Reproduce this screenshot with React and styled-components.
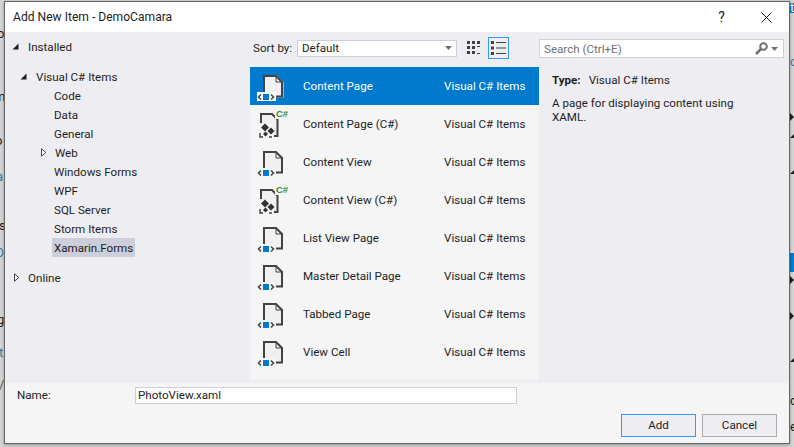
import React from 'react';
import styled, { createGlobalStyle } from 'styled-components';

const Global = createGlobalStyle`
    html, body { margin: 0; padding: 0; height: 100%; overflow: hidden; }
    body { font-family: Roboto, "Noto Sans", sans-serif; font-size: 11.6px; color: #1e1e1e; }
`;

const Desktop = styled.div`
    position: relative;
    width: 794px;
    height: 447px;
    overflow: hidden;
    background: #d4d4d4;
`;

// bits of the IDE behind the dialog
const Peek = styled.span`
    position: absolute;
    top: ${p => p.$y}px;
    left: ${p => p.$x}px;
    font-size: 13px;
    line-height: 14px;
    color: ${p => p.$color || '#1e1e1e'};
`;

const BackBand = styled.div`
    position: absolute;
    right: 0;
    top: ${p => p.$y}px;
    height: ${p => p.$h}px;
    width: 5px;
    background: #007acc;
`;

const BackMark = styled.svg`
    position: absolute;
    left: 790px;
    top: ${p => p.$y}px;
`;

const Window = styled.div`
    position: absolute;
    left: 4px;
    top: 1px;
    width: 786px;
    height: 443px;
    box-sizing: border-box;
    border: 1px solid #666;
    box-shadow: 0 1px 3px rgba(0, 0, 0, 0.3);
    display: flex;
    flex-direction: column;
    background: #eeeef2;
`;

const TitleBar = styled.div`
    height: 30px;
    flex: none;
    background: #fff;
    display: flex;
    align-items: center;
    padding-left: 8px;
    font-size: 12.1px;
`;

const Title = styled.div`
    flex: 1;
`;

const TitleBtn = styled.div`
    width: 45px;
    height: 30px;
    display: flex;
    align-items: center;
    justify-content: center;
    font-size: 14px;
`;

const Body = styled.div`
    flex: 1;
    display: flex;
    min-height: 0;
`;

const TreePane = styled.div`
    width: 245px;
    flex: none;
    padding-top: 5px;
`;

const TreeRow = styled.div`
    height: 19px;
    display: flex;
    align-items: center;
    padding-left: ${p => p.$indent}px;
    margin-top: ${p => p.$gap || 0}px;
`;

const Arrow = styled.span`
    width: 16px;
    margin-left: -16px;
    flex: none;
    display: flex;
    padding-left: 1px;
`;

const TreeLabel = styled.span`
    padding: 0 2px;
    height: 19px;
    line-height: 21px;
    background: ${p => (p.$active ? '#ccceDB' : 'transparent')};
    margin-left: -2px;
`;

const CenterPane = styled.div`
    width: 289px;
    flex: none;
    display: flex;
    flex-direction: column;
`;

const Toolbar = styled.div`
    height: 35px;
    flex: none;
    display: flex;
    align-items: center;
    padding-left: 3px;
    padding-bottom: 3px;
    box-sizing: border-box;
`;

const SortLabel = styled.span`
    width: 44px;
    flex: none;
`;

const Combo = styled.div`
    width: 160px;
    height: 17px;
    box-sizing: border-box;
    border: 1px solid #ccceDB;
    background: #fff;
    display: flex;
    align-items: center;
    justify-content: space-between;
    padding: 0 4px;
`;

const ViewBtn = styled.div`
    width: 21px;
    height: 22px;
    box-sizing: border-box;
    margin-left: ${p => p.$gap}px;
    border: 1px solid ${p => (p.$on ? '#3399ff' : 'transparent')};
    display: flex;
    align-items: center;
    justify-content: center;
`;

const ItemList = styled.div`
    height: 313px;
    background: #f5f5f5;
`;

const Item = styled.div`
    height: 38px;
    display: grid;
    grid-template-columns: 53px 141px 1fr;
    align-items: center;
    background: ${p => (p.$selected ? '#007acc' : 'transparent')};
    color: ${p => (p.$selected ? '#fff' : '#1e1e1e')};
`;

const ItemIcon = styled.div`
    display: flex;
    padding-left: 6px;
`;

const InfoPane = styled.div`
    flex: 1;
    padding-right: 5px;
    display: flex;
    flex-direction: column;
`;

const Search = styled.div`
    height: 19px;
    margin-top: 7px;
    box-sizing: border-box;
    border: 1px solid #ccceDB;
    background: #fff;
    display: flex;
    align-items: center;
    justify-content: space-between;
    padding: 0 5px 0 4px;
    color: #717171;
`;

const SearchIcons = styled.span`
    display: flex;
    align-items: center;
    gap: 3px;
`;

const Info = styled.div`
    padding: 15px 0 0 13px;
    line-height: 14px;
    max-width: 195px;
`;

const InfoType = styled.div`
    margin-bottom: 9px;
    b { font-weight: 700; margin-right: 8px; }
`;

const Footer = styled.div`
    height: 60px;
    flex: none;
    background: #f5f5f5;
    display: flex;
    flex-direction: column;
`;

const NameRow = styled.div`
    display: flex;
    align-items: center;
    margin-top: 4px;
    padding-left: 12px;
`;

const NameLabel = styled.span`
    width: 118px;
    flex: none;
    padding-bottom: 1px;
`;

const NameInput = styled.div`
    width: 382px;
    height: 17px;
    box-sizing: border-box;
    border: 1px solid #ccceDB;
    background: #fff;
    line-height: 15px;
    padding-left: 2px;
`;

const Buttons = styled.div`
    display: flex;
    justify-content: flex-end;
    gap: 6px;
    margin-top: 10px;
    padding-right: 12px;
`;

const Button = styled.div`
    width: 75px;
    height: 23px;
    box-sizing: border-box;
    border: 1px solid ${p => (p.$primary ? '#3399ff' : '#acacac')};
    background: #eeeef2;
    text-align: center;
    line-height: 21px;
`;

const Tri = ({ open }) => (
    <svg width="8" height="9" viewBox="0 0 8 9">
        {open
            ? <path d="M0.5 7.5 L6.5 7.5 L6.5 1.5 Z" fill="#1e1e1e" />
            : <path d="M2.5 0.8 L2.5 8.2 L6.8 4.5 Z" fill="#fff" stroke="#444" />}
    </svg>
);

const SmallDown = () => (
    <svg width="7" height="4" viewBox="0 0 7 4"><path d="M0 0 H7 L3.5 4 Z" fill="#717171" /></svg>
);

const PageIcon = ({ selected }) => (
    <svg width="30" height="30" viewBox="0 0 30 30">
        {selected && (
            <path d="M7 21 V4 H20.500 L27.500 11 V26.500 H19 V30 H1 V21 Z" fill="#fff" />
        )}
        <path d="M8 21 V5 H20 L26 11 V25.500 H20" fill="#f0eff1" stroke="#424242" strokeWidth="2" />
        <path d="M20 5 V11 H26" fill="none" stroke="#424242" strokeWidth="1" />
        {!selected && <path d="M1 21 H20 V30 H1 Z" fill="#f5f5f5" />}
        {selected && <path d="M1 21 H20 V30 H1 Z" fill="#fff" />}
        <path d="M5 23.500 L2.500 26 L5 28.500 M15 23.500 L17.500 26 L15 28.500" fill="none" stroke="#424242" strokeWidth="1.500" />
        <rect x="7" y="23" width="6" height="6" fill="#007acc" />
    </svg>
);

const CsIcon = () => (
    <svg width="32" height="30" viewBox="0 0 32 30">
        <path d="M5 14 V5 H16 L21.500 10.500 V27 H18" fill="#f0eff1" stroke="#424242" strokeWidth="2" />
        <path d="M19 2 H32 V10 H19 Z" fill="#f5f5f5" />
        <path d="M4 15 H17 V29 H4 Z" fill="#f5f5f5" />
        <path d="M9 14.500 L13 18.500 L9 22.500 L5 18.500 Z M15 18.500 L18.500 22 L15 25.500 L11.500 22 Z M9.500 22.500 L12 25 L9.500 27.500 L7 25 Z" fill="#333" />
        <path d="M4 24 V28 H7 M13 28 H16" stroke="#424242" strokeWidth="1.500" fill="none" />
        <text x="20" y="8" fontSize="9.500" fontWeight="700" fill="#388a34" fontFamily="Liberation Sans, sans-serif">C#</text>
    </svg>
);

const GridIcon = () => (
    <svg width="14" height="14" viewBox="0 0 14 14" fill="#424242">
        <path d="M0 0h3v3H0zM5 0h3v3H5zM10 0h3v3h-3zM0 5h3v3H0zM5 5h3v3H5zM0 10h3v3H0zM5 10h3v3H5zM10 5h3v1h-3zM10 12h3v1h-3z" />
    </svg>
);

const ListIcon = () => (
    <svg width="15" height="14" viewBox="0 0 15 14" fill="#424242">
        <path d="M0 0h3v3H0zM0 5.500h3v3H0zM0 11h3v3H0zM5 1h10v1H5zM5 6.500h10v1H5zM5 12h10v1H5z" />
    </svg>
);

const SearchIcon = () => (
    <svg width="13" height="13" viewBox="0 0 13 13">
        <circle cx="8.500" cy="4.500" r="3.300" fill="none" stroke="#717171" strokeWidth="2" />
        <path d="M6 7 L1 12" stroke="#717171" strokeWidth="2.500" />
    </svg>
);

const CloseIcon = () => (
    <svg width="11" height="11" viewBox="0 0 11 11">
        <path d="M0.500 0.500 L10.500 10.500 M10.500 0.500 L0.500 10.500" stroke="#1e1e1e" fill="none" />
    </svg>
);

const tree = [
    { label: 'Installed', indent: 22, arrow: 'open' },
    { label: 'Visual C# Items', indent: 30, arrow: 'open', gap: 11 },
    { label: 'Code', indent: 49 },
    { label: 'Data', indent: 49 },
    { label: 'General', indent: 49 },
    { label: 'Web', indent: 49, arrow: 'closed' },
    { label: 'Windows Forms', indent: 49 },
    { label: 'WPF', indent: 49 },
    { label: 'SQL Server', indent: 49 },
    { label: 'Storm Items', indent: 49 },
    { label: 'Xamarin.Forms', indent: 49, active: true },
    { label: 'Online', indent: 22, arrow: 'closed', gap: 11 },
];

const items = [
    { name: 'Content Page', selected: true },
    { name: 'Content Page (C#)', cs: true },
    { name: 'Content View' },
    { name: 'Content View (C#)', cs: true },
    { name: 'List View Page' },
    { name: 'Master Detail Page' },
    { name: 'Tabbed Page' },
    { name: 'View Cell' },
];

const peeks = [
    ['o', -3, 27], ['m', -6, 90], ['o', -5, 134], ['a', -4, 170, '#2b7fa8'], ['s', -1, 219],
    ['O', -5, 246, '#2b7fa8'], ['g', -3, 313], ['t', -1, 346, '#2b7fa8'], ['/', -1, 378, '#555'],
    ['ti', 790, 1, '#fff'], ['c', 790, 55, '#2b7fa8'], ['c', 790, 394], ['e', 790, 420],
];

const backMarks = [
    [113, 'M0 0 L4 4 L0 8 Z'], [134, 'M4 0 V4 H0 Z'], [170, 'M4 0 V4 H0 Z'],
    [276, 'M0 0 L4 4 L0 8 Z'], [312, 'M0 0 L4 4 L0 8 Z'], [358, 'M4 0 V4 H0 Z'],
];

const App = () => (
    <Desktop>
        <Global />
        <BackBand $y={3} $h={10} />
        <BackBand $y={253} $h={19} />
        {peeks.map(([t, x, y, c], i) => <Peek key={i} $x={x} $y={y} $color={c}>{t}</Peek>)}
        {backMarks.map(([y, d]) => (
            <BackMark key={y} $y={y} width="4" height="8" viewBox="0 0 4 8"><path d={d} fill="#1e1e1e" /></BackMark>
        ))}
        <Window>
            <TitleBar>
                <Title>Add New Item - DemoCamara</Title>
                <TitleBtn>?</TitleBtn>
                <TitleBtn><CloseIcon /></TitleBtn>
            </TitleBar>
            <Body>
                <TreePane>
                    {tree.map(n => (
                        <TreeRow key={n.label} $indent={n.indent} $gap={n.gap}>
                            {n.arrow && <Arrow><Tri open={n.arrow === 'open'} /></Arrow>}
                            <TreeLabel $active={n.active}>{n.label}</TreeLabel>
                        </TreeRow>
                    ))}
                </TreePane>
                <CenterPane>
                    <Toolbar>
                        <SortLabel>Sort by:</SortLabel>
                        <Combo>Default<SmallDown /></Combo>
                        <ViewBtn $gap={6}><GridIcon /></ViewBtn>
                        <ViewBtn $gap={4} $on><ListIcon /></ViewBtn>
                    </Toolbar>
                    <ItemList>
                        {items.map(it => (
                            <Item key={it.name} $selected={it.selected}>
                                <ItemIcon>{it.cs ? <CsIcon /> : <PageIcon selected={it.selected} />}</ItemIcon>
                                <span>{it.name}</span>
                                <span>Visual C# Items</span>
                            </Item>
                        ))}
                    </ItemList>
                </CenterPane>
                <InfoPane>
                    <Search>
                        Search (Ctrl+E)
                        <SearchIcons><SearchIcon /><SmallDown /></SearchIcons>
                    </Search>
                    <Info>
                        <InfoType><b>Type:</b>Visual C# Items</InfoType>
                        A page for displaying content using XAML.
                    </Info>
                </InfoPane>
            </Body>
            <Footer>
                <NameRow>
                    <NameLabel>Name:</NameLabel>
                    <NameInput>PhotoView.xaml</NameInput>
                </NameRow>
                <Buttons>
                    <Button $primary>Add</Button>
                    <Button>Cancel</Button>
                </Buttons>
            </Footer>
        </Window>
    </Desktop>
);

export default App;
